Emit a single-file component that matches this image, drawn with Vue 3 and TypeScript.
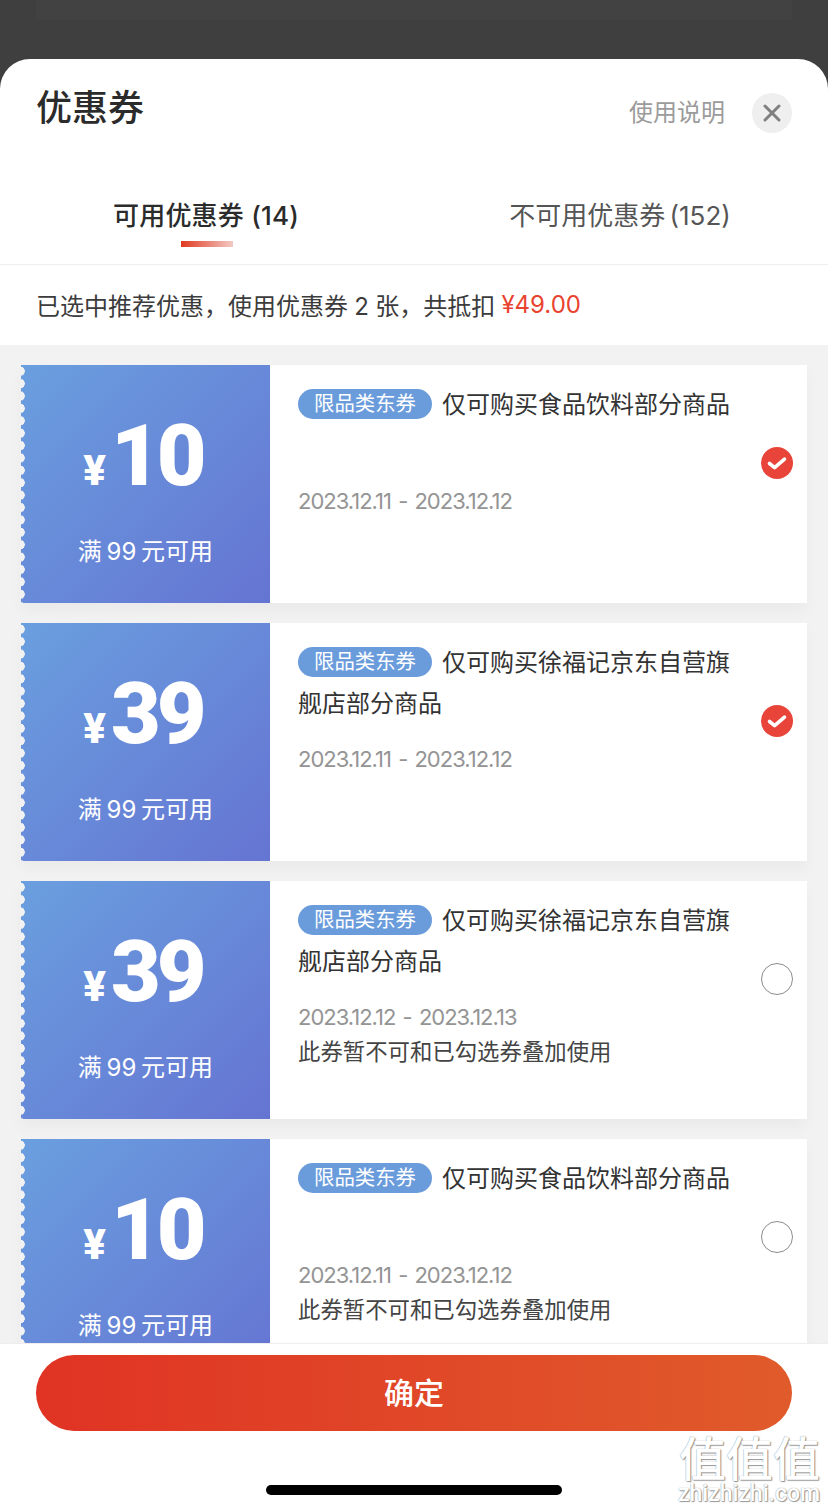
<script setup lang="ts">
interface Coupon {
  amount: string
  desc: string
  start: string
  end: string
  checked: boolean
  warn: boolean
}
const coupons: Coupon[] = [
  { amount: '10', desc: '仅可购买食品饮料部分商品', start: '2023.12.11', end: '2023.12.12', checked: true, warn: false },
  { amount: '39', desc: '仅可购买徐福记京东自营旗舰店部分商品', start: '2023.12.11', end: '2023.12.12', checked: true, warn: false },
  { amount: '39', desc: '仅可购买徐福记京东自营旗舰店部分商品', start: '2023.12.12', end: '2023.12.13', checked: false, warn: true },
  { amount: '10', desc: '仅可购买食品饮料部分商品', start: '2023.12.11', end: '2023.12.12', checked: false, warn: true },
]
</script>

<template>
  <div class="page">
    <div class="backdrop"><div class="backdrop-band"></div></div>
    <div class="sheet">
      <header class="head">
        <h1 class="title">优惠券</h1>
        <div class="head-right">
          <span class="help">使用说明</span>
          <button class="close" aria-label="关闭">
            <svg width="18" height="18" viewBox="0 0 18 18"><path d="M2 2 16 16M16 2 2 16" stroke="#808080" stroke-width="3" stroke-linecap="round" fill="none"/></svg>
          </button>
        </div>
      </header>
      <nav class="tabs">
        <div class="tab tab-on">
          <span>可用优惠券 (14)</span>
          <i class="tab-bar"></i>
        </div>
        <div class="tab tab-off"><span>不可用优惠券 (152)</span></div>
      </nav>
      <div class="summary">已选中推荐优惠，使用优惠券 2 张，共抵扣 <em class="sum-price">¥49.00</em></div>
      <div class="list">
        <article v-for="(c, i) in coupons" :key="i" class="card">
          <div class="card-left">
            <div class="amount"><span class="yen">¥</span><span class="num">{{ c.amount }}</span></div>
            <div class="cond">满 99 元可用</div>
          </div>
          <div class="card-right">
            <div class="info">
              <p class="desc"><span class="tag">限品类东券</span>{{ c.desc }}</p>
              <p class="date">{{ c.start }} - {{ c.end }}</p>
              <p v-if="c.warn" class="warn">此券暂不可和已勾选券叠加使用</p>
            </div>
            <svg v-if="c.checked" class="radio" width="32" height="32" viewBox="0 0 32 32">
              <circle cx="16" cy="16" r="16" fill="#e8443a"/>
              <path d="M8.5 16.5 13.6 20.6 23.5 12.2" fill="none" stroke="#fff" stroke-width="3.6" stroke-linecap="round" stroke-linejoin="round"/>
            </svg>
            <svg v-else class="radio" width="32" height="32" viewBox="0 0 32 32">
              <circle cx="16" cy="16" r="15.5" fill="#fff" stroke="#8c8c8c" stroke-width="1"/>
            </svg>
          </div>
        </article>
      </div>
      <footer class="foot">
        <button class="confirm">确定</button>
        <div class="home"></div>
      </footer>
      <div class="watermark">
        <span class="wm-cn">值值值</span>
        <span class="wm-en">zhizhizhi.com</span>
      </div>
    </div>
  </div>
</template>

<style>
html, body { margin: 0; padding: 0; background: #fff; }
</style>

<style scoped>
.page {
  width: 828px;
  height: 1511px;
  display: flex;
  flex-direction: column;
  overflow: hidden;
  background: #3f3f3f;
  font-family: "Inter", "Noto Sans CJK SC", sans-serif;
  color: #2b2b2b;
}
.backdrop { height: 59px; flex: none; padding: 0 36px; box-sizing: border-box; }
.backdrop-band { height: 20px; background: #424242; }
.sheet {
  flex: 1;
  min-height: 0;
  position: relative;
  display: flex;
  flex-direction: column;
  background: #fff;
  border-radius: 30px 30px 0 0;
  overflow: hidden;
}
.head {
  height: 106px;
  flex: none;
  display: flex;
  justify-content: space-between;
  align-items: flex-start;
  padding: 0 36px;
}
.title {
  margin: 24px 0 0;
  font-size: 36px;
  line-height: 50px;
  font-weight: 500;
  color: #2b2b2b;
}
.head-right { display: flex; align-items: flex-start; gap: 27px; margin-top: 34px; }
.help { font-size: 24px; line-height: 40px; color: #9b9b9b; margin-top: 0; }
.close {
  width: 40px;
  height: 40px;
  border: 0;
  padding: 0;
  border-radius: 50%;
  background: #efefef;
  display: flex;
  align-items: center;
  justify-content: center;
}
.tabs {
  height: 100px;
  flex: none;
  display: flex;
  box-sizing: border-box;
  border-bottom: 1px solid #eeeeee;
}
.tab { position: relative; text-align: center; font-size: 26px; line-height: 36px; padding-top: 33px; box-sizing: border-box; }
.tab-on { font-weight: 500; color: #2b2b2b; width: 412px; letter-spacing: 0.2px; }
.tab-off { color: #555; width: 416px; word-spacing: -3px; }
.tab-bar {
  position: absolute;
  left: 181px;
  top: 76px;
  width: 52px;
  height: 6px;
  background: linear-gradient(90deg, #e0391f, #f3c9c4);
}
.summary {
  height: 80px;
  box-sizing: border-box;
  padding-bottom: 2px;
  flex: none;
  display: flex;
  align-items: center;
  padding-left: 36px;
  font-size: 24px;
  white-space: pre-wrap;
  color: #3c3c3c;
  word-spacing: -0.5px;
}
.sum-price { font-style: normal; color: #e8432f; }
.list {
  flex: 1;
  min-height: 0;
  overflow: hidden;
  background: #f2f2f2;
  padding: 20px 21px 0;
  display: flex;
  flex-direction: column;
  gap: 20px;
}
.card {
  flex: none;
  height: 238px;
  display: flex;
  box-shadow: 0 8px 14px rgba(0, 0, 0, 0.035);
}
.card-left {
  position: relative;
  width: 249px;
  flex: none;
  background: linear-gradient(135deg, #6a9fdf 0%, #6574d2 100%);
  color: #fff;
  display: flex;
  flex-direction: column;
  align-items: center;
}
.card-left::before {
  content: "";
  position: absolute;
  left: -1px;
  top: 0;
  bottom: 0;
  width: 5px;
  background: radial-gradient(circle at 0 50%, #f2f2f2 4.5px, transparent 5px) 0 0 / 5px 12.4px repeat-y;
}
.amount { display: flex; align-items: baseline; height: 92px; margin: 45px 5px 0 0; }
.yen { font-size: 42px; font-weight: 900; line-height: 92px; margin-right: 5px; font-family: "Roboto", "Noto Sans CJK SC", sans-serif; }
.num { font-size: 86px; font-weight: 900; line-height: 92px; font-family: "Roboto", sans-serif; letter-spacing: -4px; }
.cond { margin-top: 33px; font-size: 24px; line-height: 34px; white-space: nowrap; word-spacing: -2px; }
.card-right {
  flex: 1;
  min-width: 0;
  display: flex;
  background: #fff;
  padding: 20px 14px 0 28px;
}
.info { width: 433px; flex: none; }
.desc { margin: 0; font-size: 24px; line-height: 40.5px; height: 82px; color: #333; }
.tag {
  display: inline-block;
  width: 134px;
  height: 30px;
  margin-right: 10px;
  border-radius: 15px;
  background: #6a9cdc;
  color: #fff;
  font-size: 20.4px;
  line-height: 30px;
  text-align: center;
  vertical-align: 2px;
}
.date { margin: 17px 0 0; font-size: 22px; line-height: 34px; color: #949494; white-space: nowrap; letter-spacing: -1px; word-spacing: 2px; }
.warn { margin: 0; padding-top: 0; font-size: 22.4px; line-height: 36px; color: #444; white-space: nowrap; }
.radio { flex: none; margin-top: 62px; margin-left: auto; }
.foot {
  flex: none;
  height: 168px;
  box-sizing: border-box;
  border-top: 1px solid #eeeeee;
  background: #fff;
  padding: 11px 36px 0;
  display: flex;
  flex-direction: column;
  align-items: center;
}
.confirm {
  width: 756px;
  height: 76px;
  flex: none;
  border: 0;
  border-radius: 38px;
  background: linear-gradient(90deg, #e03324 0%, #e05b2b 100%);
  color: #fff;
  font-family: inherit;
  font-size: 30px;
  font-weight: 500;
  padding: 0 0 4px;
}
.home { width: 296px; height: 10px; margin-top: 54px; border-radius: 5px; background: #000; }
.watermark {
  position: absolute;
  right: 8px;
  bottom: 6px;
  display: flex;
  flex-direction: column;
  align-items: flex-end;
  gap: 2px;
  color: #fff;
  font-family: "Noto Sans CJK SC", sans-serif;
  text-shadow: 0 0 1px #777, 1px 1px 1px #999;
  pointer-events: none;
}
.wm-cn { font-size: 47px; line-height: 48px; font-weight: 500; }
.wm-en { font-size: 23px; line-height: 23px; font-weight: 500; font-family: "Roboto", sans-serif; }
</style>
